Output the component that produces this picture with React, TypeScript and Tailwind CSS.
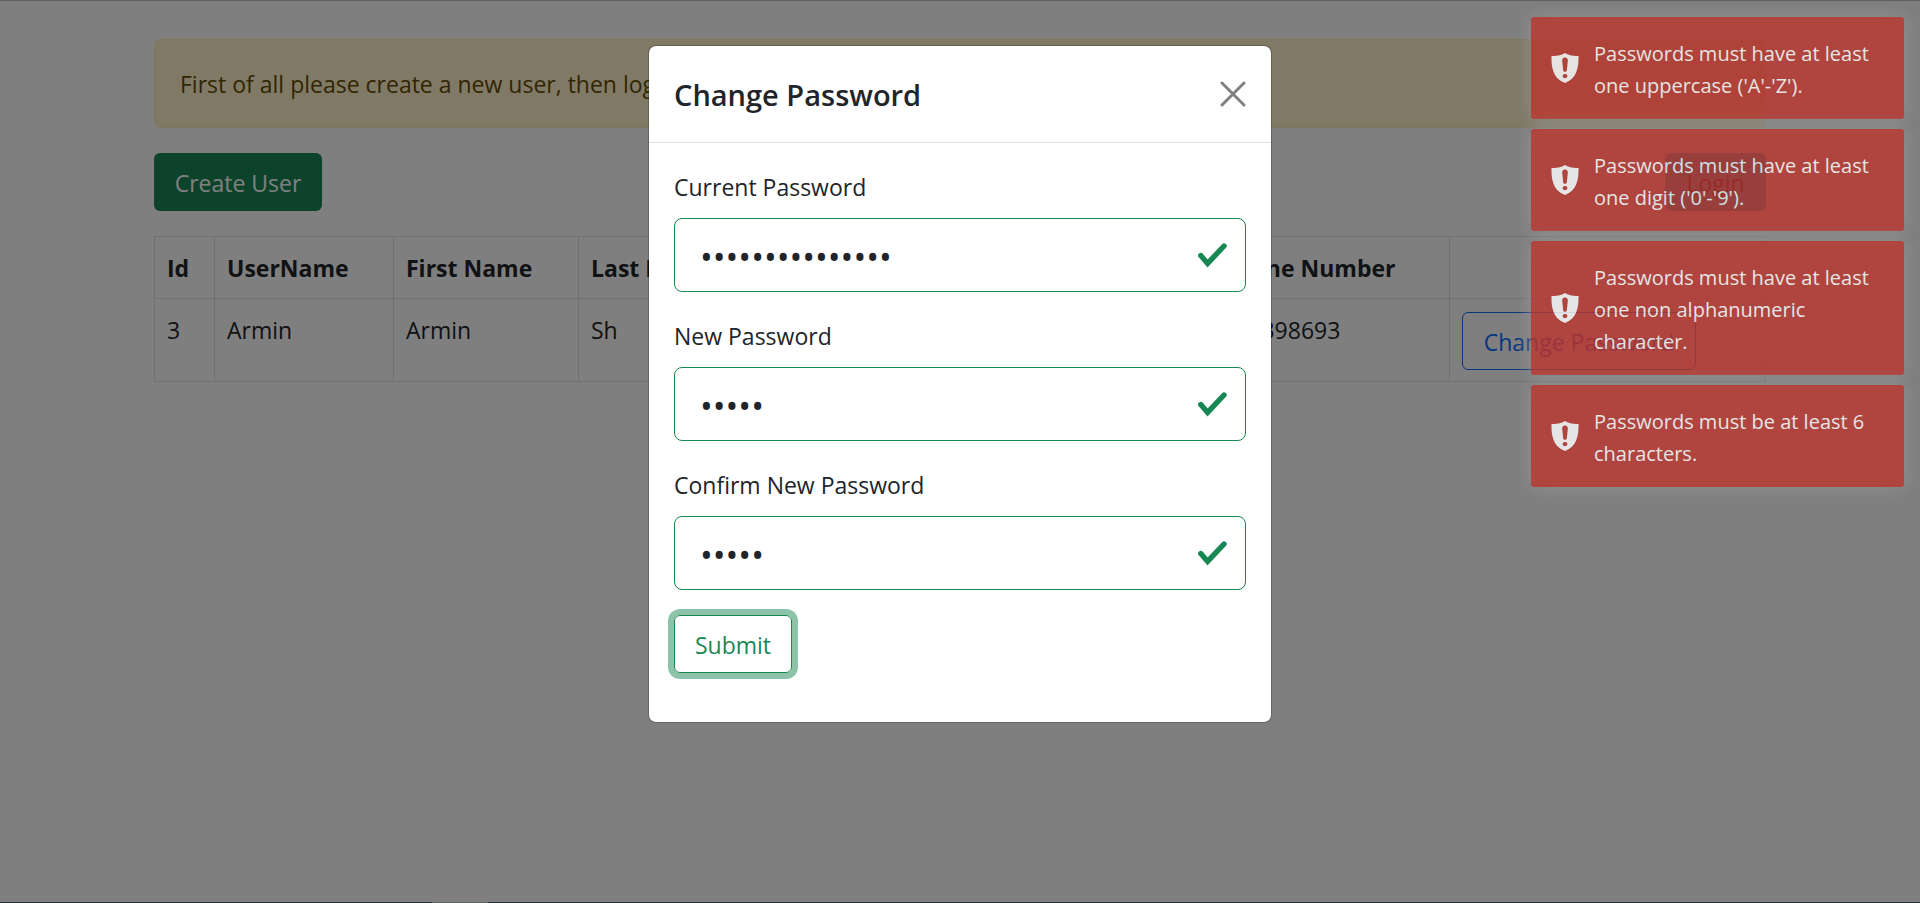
import { useState } from 'react';
import type { ReactNode } from 'react';

interface User {
  id: number;
  userName: string;
  firstName: string;
  lastName: string;
  phoneNumber: string;
}

const users: User[] = [
  {
    id: 3,
    userName: 'Armin',
    firstName: 'Armin',
    lastName: 'Sh',
    phoneNumber: '912398693',
  },
];

const errors = [
  "Passwords must have at least one uppercase ('A'-'Z').",
  "Passwords must have at least one digit ('0'-'9').",
  'Passwords must have at least one non alphanumeric character.',
  'Passwords must be at least 6 characters.',
];

const Th = ({ className = '', children }: { className?: string; children?: ReactNode }) => (
  <th
    className={`border border-[#dee2e6] px-3 pt-[13px] pb-[11px] text-left font-bold ${className}`}
  >
    {children}
  </th>
);

const Td = ({ children }: { children?: ReactNode }) => (
  <td className="border border-[#dee2e6] px-3 pt-[13px] pb-[11px] align-top">{children}</td>
);

const PasswordField = ({ id, label, initial }: { id: string; label: string; initial: string }) => {
  const [value, setValue] = useState(initial);

  return (
    <div className="flex flex-col gap-3">
      <label htmlFor={id} className="leading-[38px]">
        {label}
      </label>
      <div className="relative">
        <input
          id={id}
          type="password"
          value={value}
          onChange={(e) => setValue(e.target.value)}
          className="block h-[74px] w-full rounded-lg border border-[#198754] bg-white pt-1 pr-16 pl-[25px] text-[34px] outline-none"
        />
        <svg
          viewBox="0 0 30 26"
          className="pointer-events-none absolute top-6 right-[18px] h-[26px] w-[30px]"
          fill="none"
          stroke="#198754"
          strokeWidth="5.4"
          strokeLinecap="round"
        >
          <path d="M2.800 13.600 9.600 21.400 26 4" />
        </svg>
      </div>
    </div>
  );
};

const ChangePasswordModal = () => (
  <div
    role="dialog"
    aria-labelledby="modal-title"
    className="mx-auto mt-11 w-full max-w-[624px] rounded-lg border border-black/20 bg-white bg-clip-padding"
  >
    <div className="flex items-center justify-between border-b border-[#dee2e6] px-[25px] py-6">
      <h5 id="modal-title" className="pt-0.5 text-[29px] leading-[46px] font-semibold">
        Change Password
      </h5>
      <button type="button" aria-label="Close" className="cursor-pointer">
        <svg
          viewBox="0 0 26 26"
          className="size-[26px]"
          stroke="#808080"
          strokeWidth="3"
          strokeLinecap="round"
        >
          <path d="M2 2 24 24M24 2 2 24" />
        </svg>
      </button>
    </div>
    <form
      className="flex flex-col gap-[25px] px-[25px] pt-[25px] pb-[49px]"
      onSubmit={(e) => e.preventDefault()}
    >
      <PasswordField id="current" label="Current Password" initial="currentpassword" />
      <PasswordField id="new" label="New Password" initial="armin" />
      <PasswordField id="confirm" label="Confirm New Password" initial="armin" />
      <button
        type="submit"
        className="h-[58px] w-[118px] cursor-pointer rounded-md border border-[#198754] pt-0.5 text-[#198754] ring-6 ring-[#198754]/50"
      >
        Submit
      </button>
    </form>
  </div>
);

const Toast = ({ message }: { message: string }) => (
  <div
    role="alert"
    className="flex items-center gap-[15px] rounded-[3px] bg-[#bd362f] py-[19px] pr-5 pl-5 text-white opacity-80 shadow-[0_0_18px_#999999]"
  >
    <svg viewBox="0 0 28 30" className="h-[30px] w-7 shrink-0">
      <path
        fill="#fff"
        fillRule="evenodd"
        d="M14 0C11 2 6 3.300 .5 3C.2 14 2 25.500 14 30C26 25.500 27.800 14 27.500 3C22 3.300 17 2 14 0ZM14 4.600C16 4.600 17 6 16.800 8L15.800 17.500C15.500 19.400 12.500 19.400 12.200 17.500L11.200 8C11 6 12 4.600 14 4.600ZM14 21A2.500 2.100 0 1 1 14 25.200A2.500 2.100 0 1 1 14 21Z"
      />
    </svg>
    <p className="-mb-0.5 pt-0.5 text-[20px] leading-8">{message}</p>
  </div>
);

export default function App() {
  return (
    <div className="relative flex min-h-screen flex-col border-t border-[#606060] bg-white font-['Open_Sans','Noto_Sans',sans-serif] text-[23px] leading-[37px] text-[#212529]">
      <main className="mx-auto flex w-full max-w-[1612px] flex-1 flex-col gap-[25px] pt-[38px]">
        <div className="rounded-md border border-[#ffecb5] bg-[#fff3cd] px-[25px] pt-[26px] pb-6 text-[#664d03]">
          First of all please create a new user, then login.
        </div>

        <div className="flex justify-between">
          <button
            type="button"
            className="h-[58px] w-[168px] rounded-md bg-[#198754] pt-0.5 text-white"
          >
            Create User
          </button>
          <button
            type="button"
            className="h-[58px] w-[101px] rounded-md bg-[#0dcaf0] pt-0.5 text-black"
          >
            Login
          </button>
        </div>

        <table className="w-full table-fixed border-collapse">
          <thead>
            <tr>
              <Th className="w-[60px]">Id</Th>
              <Th className="w-[179px]">UserName</Th>
              <Th className="w-[185px]">First Name</Th>
              <Th>Last Name</Th>
              <Th className="w-[240px]">Phone Number</Th>
              <Th className="w-[316px]" />
            </tr>
          </thead>
          <tbody>
            {users.map((user) => (
              <tr key={user.id}>
                <Td>{user.id}</Td>
                <Td>{user.userName}</Td>
                <Td>{user.firstName}</Td>
                <Td>{user.lastName}</Td>
                <Td>{user.phoneNumber}</Td>
                <Td>
                  <button
                    type="button"
                    className="block h-[58px] w-[234px] rounded-md border border-[#0d6efd] pt-0.5 text-[#0d6efd]"
                  >
                    Change Password
                  </button>
                </Td>
              </tr>
            ))}
          </tbody>
        </table>
      </main>

      <footer className="h-px bg-[#4c6470] pl-[432px]">
        <div className="h-px w-14 bg-[#bcc8cc]" />
      </footer>

      <div className="absolute inset-0 bg-black/50">
        <ChangePasswordModal />
      </div>

      <div className="absolute top-4 right-4 flex w-[373px] flex-col gap-[10px]">
        {errors.map((message) => (
          <Toast key={message} message={message} />
        ))}
      </div>
    </div>
  );
}
